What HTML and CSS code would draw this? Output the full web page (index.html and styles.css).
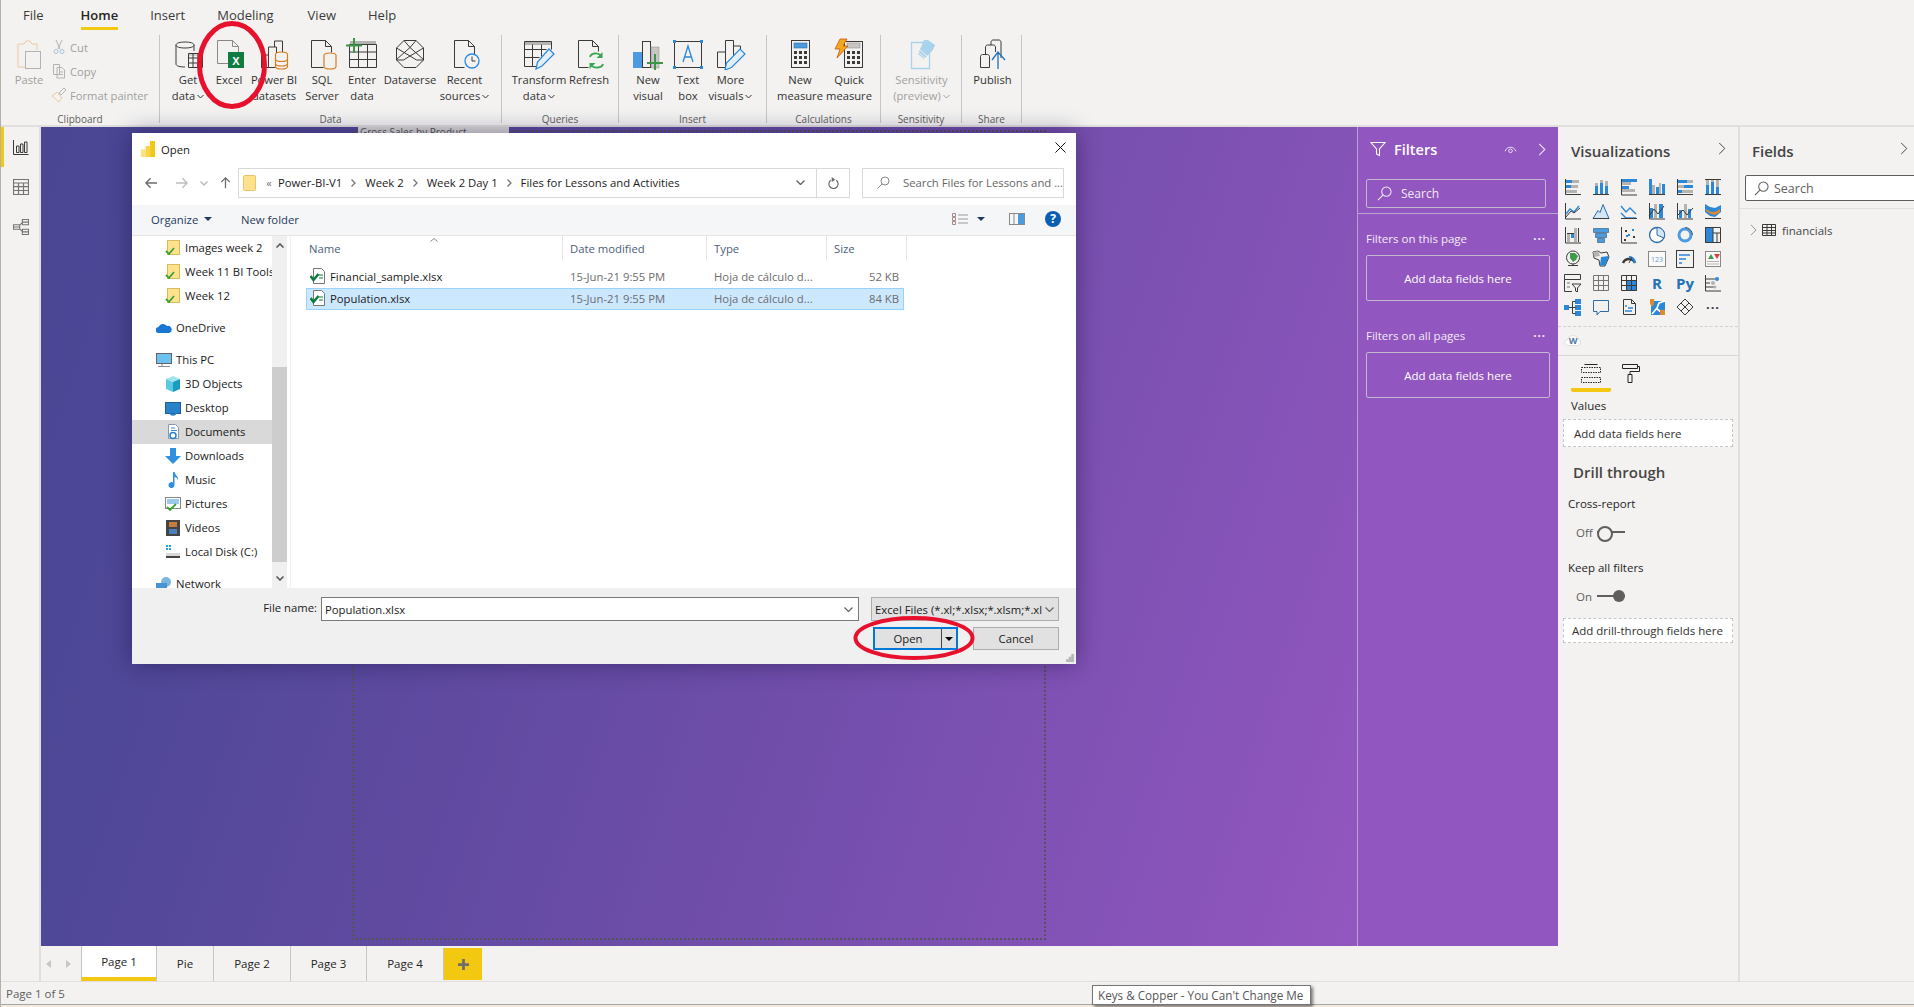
FILE: index.html
```html
<!DOCTYPE html>
<html lang="en">
<head>
<meta charset="utf-8">
<title>Power BI Desktop - Open</title>
<link rel="stylesheet" href="styles.css">
</head>
<body>
<div class="app">
  <header class="ribbon">
    <nav class="menu">
      <span class="menu-item first">File</span>
      <span class="menu-item active">Home</span>
      <span class="menu-item">Insert</span>
      <span class="menu-item modeling">Modeling</span>
      <span class="menu-item">View</span>
      <span class="menu-item">Help</span>
    </nav>
    <div class="groups">
      <section class="rgroup g-clip">
        <div class="ritems clip-items">
          <div class="ritem w44 faded">
            <svg class="ric" viewBox="0 0 32 32"><path class="ln-or" d="M5 6h6l2-3h4l2 3h5v6M5 6v23h7"/><rect class="ln-gr" x="12.5" y="13.5" width="15" height="17"/></svg>
            <span>Paste</span>
          </div>
          <div class="clip-list">
            <div class="clip-row"><svg class="cic" viewBox="0 0 16 16"><path class="ln-gr" d="M5 1l4 9M11 1L7 10"/><circle class="ln-bl" cx="5" cy="12.5" r="2"/><circle class="ln-bl" cx="11" cy="12.5" r="2"/></svg><span>Cut</span></div>
            <div class="clip-row"><svg class="cic" viewBox="0 0 16 16"><path class="ln-gr" d="M2.5 1.5h6v10h-6zM6 4.5h5l2.5 2.5v8H6zM8 9h4M8 11.5h4"/></svg><span>Copy</span></div>
            <div class="clip-row"><svg class="cic" viewBox="0 0 16 16"><path class="ln-or" d="M1 9l5-4 5 6-3 4z"/><path class="ln-gr" d="M8 6l5-5 2 2-5 5z"/></svg><span>Format painter</span></div>
          </div>
        </div>
        <div class="rglabel">Clipboard</div>
      </section>

      <section class="rgroup g-data">
        <div class="ritems">
          <div class="ritem w46">
            <svg class="ric" viewBox="0 0 32 32"><path class="ln" d="M4 7v19c0 2 4 3 9 3M4 7c0-2 4-3 9-3s9 1 9 3v6M4 7c0 2 4 3 9 3s9-1 9-3"/><path class="fill-lg" d="M16 15h15v3H16z"/><path class="ln" d="M16.5 15.5h14v14h-14zM16.5 20h14M16.5 25h14M21 15.500v14M26 15.500v14"/></svg>
            <span>Get</span><span>data <svg class="chev" viewBox="0 0 7 5"><path d="M.5 1l3 3 3-3"/></svg></span>
          </div>
          <div class="ritem w36">
            <svg class="ric" viewBox="0 0 32 32"><path class="ln-g" d="M4.500 2.500h15l6 6v17h-21zM19.500 2.500v6h6"/><rect class="fill-xl" x="15" y="14" width="16" height="16"/><text class="xl-x" x="23" y="27">X</text></svg>
            <span>Excel</span>
          </div>
          <div class="ritem w54">
            <svg class="ric" viewBox="0 0 32 32"><path class="ln" d="M3.500 30V17h7M10.500 30V9h8v9M16.500 9V3h8v13M3.500 29.500h14"/><ellipse class="ln-o" cx="23.500" cy="16.500" rx="6" ry="2.500"/><path class="ln-o" d="M17.500 16.500v12c0 1.500 2.500 2.500 6 2.500s6-1 6-2.500v-12M17.500 21c0 1.500 2.500 2.500 6 2.500s6-1 6-2.500M17.500 25.500c0 1.500 2.500 2.500 6 2.500s6-1 6-2.500"/></svg>
            <span>Power BI</span><span>datasets</span>
          </div>
          <div class="ritem w42">
            <svg class="ric" viewBox="0 0 32 32"><path class="ln" d="M5.500 2.500h14l6 6v6M19.500 2.500v6h6M5.500 2.500v27h12"/><ellipse class="ln-o" cx="24" cy="17.500" rx="6" ry="2.500"/><path class="ln-o" d="M18 17.500v11c0 1.500 2.500 2.500 6 2.500s6-1 6-2.500v-11"/></svg>
            <span>SQL</span><span>Server</span>
          </div>
          <div class="ritem w38">
            <svg class="ric" viewBox="0 0 32 32"><path class="fill-g" d="M4 3h26v4H4z"/><path class="ln" d="M3.500 6.500h27v23h-27zM3.500 14h27M3.500 21.500h27M12.500 6.500v23M21.500 6.500v23"/><path class="ln-gn" d="M8 0v15M0 7.500h16"/></svg>
            <span>Enter</span><span>data</span>
          </div>
          <div class="ritem w58">
            <svg class="ric" viewBox="0 0 32 32"><path class="ln" d="M10 2.500h12l7.500 7.500v12L22 29.500H10L2.500 22V10zM2.500 10l13.500 8 13.500-8M10 2.500l6 7 6-7M16 9.500l-13.500 12M16 9.500l13.500 12M2.500 22l7 0 6.500-4 6.500 4h7"/></svg>
            <span>Dataverse</span>
          </div>
          <div class="ritem w51">
            <svg class="ric" viewBox="0 0 32 32"><path class="ln" d="M5.500 2.500h14l6 6v8M19.500 2.500v6h6M5.500 2.500v27h10"/><circle class="ln-b" cx="23" cy="23" r="7"/><path class="ln" d="M23 18.500V23h3.500"/></svg>
            <span>Recent</span><span>sources <svg class="chev" viewBox="0 0 7 5"><path d="M.5 1l3 3 3-3"/></svg></span>
          </div>
        </div>
        <div class="rglabel">Data</div>
      </section>

      <section class="rgroup g-query">
        <div class="ritems">
          <div class="ritem w58">
            <svg class="ric" viewBox="0 0 32 32"><path class="fill-g" d="M2 3h26v4H2z"/><path class="ln" d="M1.500 3.500h27v8M1.500 3.500v25h13M1.500 11.500h22M1.500 19.500h15M9.500 6.500v22M18.500 6.500v12"/><path class="pen" d="M13 31l1.500-7L26 11l5 5-12 12z"/></svg>
            <span>Transform</span><span>data <svg class="chev" viewBox="0 0 7 5"><path d="M.5 1l3 3 3-3"/></svg></span>
          </div>
          <div class="ritem w42">
            <svg class="ric" viewBox="0 0 32 32"><path class="ln" d="M5.500 2.500h14l6 6v5M19.500 2.500v6h6M5.500 2.500v27h10"/><path class="ln-gn2" d="M17 19c1-4 8-5 11-1M30 26c-1 4-9 5-12 1"/><path class="tri-g" d="M29.500 14v6h-6zM16.500 31v-6h6z"/></svg>
            <span>Refresh</span>
          </div>
        </div>
        <div class="rglabel">Queries</div>
      </section>

      <section class="rgroup g-insert">
        <div class="ritems">
          <div class="ritem w44">
            <svg class="ric" viewBox="0 0 32 32"><rect class="fill-b" x="1" y="14" width="9" height="16"/><rect class="ln" x="10.500" y="3.500" width="8" height="26"/><rect class="fill-g2" x="19" y="9" width="8" height="21"/><path class="ln-gn" d="M23 16v16M15 25h16"/></svg>
            <span>New</span><span>visual</span>
          </div>
          <div class="ritem w36">
            <svg class="ric" viewBox="0 0 32 32"><rect class="ln" x="2.500" y="3.500" width="27" height="26"/><path class="fill-b2" d="M1 2h3v3H1zM28 2h3v3h-3zM1 28h3v3H1zM28 28h3v3h-3z"/><path class="ln-b" d="M11 24l5-16 5 16M12.500 19h7"/></svg>
            <span>Text</span><span>box</span>
          </div>
          <div class="ritem w49">
            <svg class="ric" viewBox="0 0 32 32"><path class="ln" d="M2.500 29.500V14h8M10.500 29.500V2.500h8v17M18.500 8h7v5M2.500 29.500h11"/><path class="pen" d="M10 32l1.500-7L25 11l5 5-13.500 13.500z"/></svg>
            <span>More</span><span>visuals <svg class="chev" viewBox="0 0 7 5"><path d="M.5 1l3 3 3-3"/></svg></span>
          </div>
        </div>
        <div class="rglabel">Insert</div>
      </section>

      <section class="rgroup g-calc">
        <div class="ritems">
          <div class="ritem w52">
            <svg class="ric" viewBox="0 0 32 32"><rect class="ln" x="7.500" y="2.500" width="18" height="27"/><rect class="fill-b-ln" x="10" y="5" width="13" height="5"/><path class="fill-d" d="M10 13h3v3h-3zM15 13h3v3h-3zM20 13h3v3h-3zM10 18h3v3h-3zM15 18h3v3h-3zM20 18h3v3h-3zM10 23h3v3h-3zM15 23h3v3h-3zM20 23h3v3h-3z"/></svg>
            <span>New</span><span>measure</span>
          </div>
          <div class="ritem w46">
            <svg class="ric" viewBox="0 0 32 32"><rect class="ln" x="11.500" y="3.500" width="18" height="26"/><rect class="fill-g2" x="14" y="5" width="13" height="5"/><path class="fill-d" d="M14 13h3v3h-3zM19 13h3v3h-3zM24 13h3v3h-3zM14 18h3v3h-3zM19 18h3v3h-3zM24 18h3v3h-3zM14 23h3v3h-3zM19 23h3v3h-3zM24 23h3v3h-3z"/><path class="bolt" d="M7 1h7l-4 7h5L4 20l3-9H2z"/></svg>
            <span>Quick</span><span>measure</span>
          </div>
        </div>
        <div class="rglabel">Calculations</div>
      </section>

      <section class="rgroup g-sens">
        <div class="ritems">
          <div class="ritem w63 faded">
            <svg class="ric" viewBox="0 0 32 32"><path class="ln-lb" d="M5.500 4.500h18v26h-18z"/><path class="fill-lb" d="M18 2l4 0 7 5-2 5-9 9-6-5z"/><path class="ln-w" d="M12 14l7 6M14 12l7 6"/></svg>
            <span>Sensitivity</span><span>(preview) <svg class="chev" viewBox="0 0 7 5"><path d="M.5 1l3 3 3-3"/></svg></span>
          </div>
        </div>
        <div class="rglabel">Sensitivity</div>
      </section>

      <section class="rgroup g-share">
        <div class="ritems">
          <div class="ritem w45">
            <svg class="ric" viewBox="0 0 32 32"><path class="ln" d="M3.500 29.500v-11c0-1 1-2 2-2h5c1 0 2 1 2 2v11zM8.500 16v-7c0-1 1-2 2-2h6c1 0 2 1 2 2v5M14 7V4c0-1 1-2 2-2h6c1 0 2 1 2 2v16"/><path class="ln-b2" d="M21 31V14M15 22l6-8 7 8"/></svg>
            <span>Publish</span>
          </div>
        </div>
        <div class="rglabel">Share</div>
      </section>
    </div>
  </header>

  <main class="main">
    <aside class="rail">
      <div class="rail-btn on"><svg class="rail-ic" viewBox="0 0 16 16"><path class="ln" d="M.5 1v14.500H15.500M3.500 7h2.500v6.500H3.500zM7.500 5h2.500v8.500H7.500zM11.500 3H14v10.500h-2.500z"/></svg></div>
      <div class="rail-btn"><svg class="rail-ic" viewBox="0 0 16 16"><path class="ln-m" d="M.5 .5h15v15H.5zM.5 4h15M.5 7.700h15M.5 11.500h15M5.500 4v11.500M10.500 4v11.500"/></svg></div>
      <div class="rail-btn"><svg class="rail-ic" viewBox="0 0 18 18"><path class="ln-m" d="M.5 6.500h7v5h-7zM10.500 .5h7v6h-7zM10.500 11.500h7v6h-7zM.5 9h7M10.500 3.500h7M10.500 14.500h7M7.500 7l3-3M7.500 11l3 3"/></svg></div>
    </aside>

    <div class="center">
      <div class="stage">
        <div class="page-area">
          <div class="visual-outline"></div>
          <div class="visual-peek">Gross Sales by Product</div>
        </div>
        <aside class="filters">
          <div class="fl-head">
            <svg class="fl-funnel" viewBox="0 0 16 16"><path d="M1 1.500h14L9.500 8v6.500l-3-1.500V8z"/></svg>
            <span class="fl-title">Filters</span>
            <svg class="fl-eye" viewBox="0 0 14 10"><path d="M1 7c2-6 10-6 12 0"/><circle cx="7" cy="6.500" r="2"/></svg>
            <svg class="fl-chev" viewBox="0 0 8 14"><path d="M1 1l6 6-6 6"/></svg>
          </div>
          <div class="fl-search">
            <svg class="srch" viewBox="0 0 16 16"><circle cx="10" cy="6" r="5"/><path d="M6.500 9.500L1 15"/></svg>
            <span>Search</span>
          </div>
          <div class="fl-rule"></div>
          <div class="fl-sec"><span>Filters on this page</span><span class="dots">...</span></div>
          <div class="fl-box">Add data fields here</div>
          <div class="fl-sec fl-sec2"><span>Filters on all pages</span><span class="dots">...</span></div>
          <div class="fl-box">Add data fields here</div>
        </aside>
      </div>
      <div class="tabbar">
        <div class="tab-arrows"><span class="tri-l"></span><span class="tri-r"></span></div>
        <div class="tab on">Page 1</div>
        <div class="tab t-pie">Pie</div>
        <div class="tab">Page 2</div>
        <div class="tab t-p3">Page 3</div>
        <div class="tab">Page 4</div>
        <div class="tab-add"><svg viewBox="0 0 12 12"><path d="M4.500 0h3v4.500H12v3H7.500V12h-3V7.500H0v-3h4.500z"/></svg></div>
      </div>
    </div>

    <aside class="viz">
      <div class="pane-head"><span>Visualizations</span><svg class="pane-chev" viewBox="0 0 8 14"><path d="M1 1l6 6-6 6"/></svg></div>
      <div class="viz-grid">
        <svg class="vi" viewBox="0 0 18 18"><path d="M1.500 1v15.500H17"/><rect class="g" x="2" y="2" width="13" height="3"/><rect class="b" x="2" y="2" width="6" height="3"/><rect class="b" x="2" y="7" width="5" height="3"/><rect class="g" x="7" y="7" width="7" height="3"/><rect class="g" x="2" y="12" width="11" height="3"/></svg>
        <svg class="vi" viewBox="0 0 18 18"><path d="M1 16.500h16"/><rect class="b" x="3" y="8" width="3" height="8"/><rect class="g" x="3" y="5" width="3" height="3"/><rect class="b" x="8" y="5" width="3" height="11"/><rect class="g" x="8" y="2" width="3" height="3"/><rect class="b" x="13" y="8" width="3" height="8"/><rect class="g" x="13" y="3" width="3" height="5"/></svg>
        <svg class="vi" viewBox="0 0 18 18"><path d="M1.500 1v16H17"/><rect class="b" x="2" y="1" width="15" height="3"/><rect class="g" x="2" y="4" width="9" height="3"/><rect class="b" x="2" y="8" width="7" height="3"/><rect class="g" x="2" y="11" width="13" height="3"/></svg>
        <svg class="vi" viewBox="0 0 18 18"><path d="M1 16.500h16"/><rect class="b" x="1" y="1" width="3" height="15"/><rect class="g" x="4" y="7" width="3" height="9"/><rect class="b" x="8" y="9" width="3" height="7"/><rect class="g" x="11" y="5" width="2" height="11"/><rect class="b" x="14" y="6" width="3" height="10"/></svg>
        <svg class="vi" viewBox="0 0 18 18"><path d="M1.500 1v16"/><rect class="b" x="2" y="2" width="9" height="3"/><rect class="g" x="11" y="2" width="6" height="3"/><rect class="g" x="2" y="7" width="6" height="3"/><rect class="b" x="8" y="7" width="9" height="3"/><rect class="b" x="2" y="12" width="4" height="3"/><rect class="g" x="6" y="12" width="11" height="3"/><path d="M1 16.500h16"/></svg>
        <svg class="vi" viewBox="0 0 18 18"><path d="M1 16.500h16M1 1.500h16"/><rect class="b" x="2" y="7" width="3" height="9"/><rect class="g" x="2" y="2" width="3" height="5"/><rect class="b" x="7" y="4" width="3" height="12"/><rect class="g" x="7" y="2" width="3" height="2"/><rect class="b" x="12" y="9" width="3" height="7"/><rect class="g" x="12" y="2" width="3" height="7"/></svg>

        <svg class="vi" viewBox="0 0 18 18"><path d="M1.500 1v16H17"/><path class="lb" d="M2 12l4-5 4 3 5-6"/><path d="M2 15l5-6 3 2 6-5"/></svg>
        <svg class="vi" viewBox="0 0 18 18"><path class="lb2" d="M1 16.500l5-8 2 2 3-8 6 14z"/><path d="M1 16.500h16"/></svg>
        <svg class="vi" viewBox="0 0 18 18"><path class="lb" d="M1 4l5 6 4-4 6 6"/><path class="lb" d="M1 11l5 5h10"/><path d="M1 16.500h16"/></svg>
        <svg class="vi" viewBox="0 0 18 18"><rect class="b" x="2" y="6" width="3" height="10"/><rect class="g" x="6" y="2" width="3" height="14"/><rect class="b" x="11" y="2" width="4" height="14"/><path d="M1.500 1v16H17M1 14l5-7 4 5 6-8"/></svg>
        <svg class="vi" viewBox="0 0 18 18"><rect class="b" x="3" y="8" width="3" height="8"/><rect class="g" x="8" y="2" width="3" height="14"/><rect class="b" x="12" y="7" width="3" height="9"/><path d="M1.500 1v16H17M1 14l6-6 4 5 6-7"/></svg>
        <svg class="vi" viewBox="0 0 18 18"><path class="b" d="M1 2l5 3 5 1 6-3v7l-6 5-5-1-5-4z"/><path class="o" d="M2 7l5 3 4 0 5-3v3l-5 3-4-1-5-3z"/><path d="M1 16.500h16"/></svg>

        <svg class="vi" viewBox="0 0 18 18"><path d="M1.500 1v16H17"/><rect class="g" x="3" y="7" width="3" height="9"/><rect class="b" x="7" y="7" width="3" height="5"/><rect class="g" x="10" y="2" width="3" height="14"/><path d="M14.500 2v14M3 7.500h7"/></svg>
        <svg class="vi" viewBox="0 0 18 18"><path class="bs" d="M1.500 2.500h15v4h-15zM3.500 7.500h11v4h-11zM5.500 12.500h7v4h-7z"/></svg>
        <svg class="vi" viewBox="0 0 18 18"><path d="M1.500 1v16H17"/><path class="dk" d="M4 13h2v2H4zM5 4h2v2H5zM13 10h2v2h-2z"/><path class="b" d="M8 8h2v2H8zM12 3h2v2h-2zM6 9h2v2H6z"/></svg>
        <svg class="vi" viewBox="0 0 18 18"><circle class="wd" cx="9" cy="9" r="7.500"/><path class="lb2" d="M9 9V1.500A7.500 7.500 0 0 1 16 12z"/></svg>
        <svg class="vi" viewBox="0 0 18 18"><circle class="dn" cx="9" cy="9" r="6"/><path class="dk2" d="M9 1.500A7.500 7.500 0 0 1 16.500 9"/></svg>
        <svg class="vi" viewBox="0 0 18 18"><rect class="b" x="1" y="1" width="8" height="16"/><path d="M1.500 1.500h15v15h-15zM9 1.500v15M9 7h7.500M13 7v9.500"/></svg>

        <svg class="vi" viewBox="0 0 18 18"><circle cx="9" cy="7.500" r="6.500"/><path class="gn" d="M6 3h5l3 3-2 4-3 2-3-4z"/><path d="M4 15.500h10M9 14v2"/></svg>
        <svg class="vi" viewBox="0 0 18 18"><path d="M1 2l5-1 3 2 6-1 2 5-4 9-5 0-1-6-5-2z"/><path class="b" d="M9 7l8-1-4 10-5-1z"/><path class="g" d="M1 2l5-1 2 5-6 1z"/></svg>
        <svg class="vi" viewBox="0 0 18 18"><path class="wide" d="M3 13a6.500 6.500 0 0 1 12 0"/><path class="wide-b" d="M9 7a6.500 6.500 0 0 1 6 6"/><path d="M9 13l3-6"/></svg>
        <svg class="vi" viewBox="0 0 18 18"><rect class="lg-ln" x=".5" y="1.500" width="17" height="15"/><text class="vt-123" x="9" y="12">123</text></svg>
        <svg class="vi" viewBox="0 0 18 18"><rect x=".5" y=".5" width="17" height="17"/><path class="bs2" d="M3 5h11M3 9h7M3 13h3"/></svg>
        <svg class="vi" viewBox="0 0 18 18"><rect class="lg-ln" x="1.500" y="1.500" width="15" height="15"/><path class="gn" d="M4 9l3-5 3 5z"/><path class="rd" d="M10 4h6l-3 5z"/><path class="gy-l" d="M3 11.500h12M3 14h12"/></svg>

        <svg class="vi" viewBox="0 0 18 18"><path d="M.5 .5h16v5H.5zM.5 5.500v12H8"/><path class="g" d="M3 8h3v2H3zM3 12h3v2H3z"/><path d="M8 10h9l-3.500 4v4l-2-1v-3z"/></svg>
        <svg class="vi gyl" viewBox="0 0 18 18"><path d="M1.500 1.500h15v15h-15zM1.500 6.500h15M1.500 11.500h15M6.500 1.500v15M11.500 1.500v15"/></svg>
        <svg class="vi" viewBox="0 0 18 18"><rect class="b" x="6" y="6" width="11" height="11"/><path d="M1.500 1.500h15v15h-15zM1.500 6.500h15M1.500 11.500h15M6.500 1.500v15M11.500 1.500v15"/></svg>
        <span class="vt">R</span>
        <span class="vt">Py</span>
        <svg class="vi" viewBox="0 0 18 18"><path d="M1.500 1v16H17M1 5h10M1 9h5M1 13h9"/><circle class="b" cx="13" cy="5" r="2"/><circle class="g" cx="9" cy="9" r="2"/><circle class="g" cx="11" cy="13" r="1.500"/></svg>

        <svg class="vi" viewBox="0 0 18 18"><rect class="b" x="0" y="7" width="5" height="5"/><rect class="b" x="11" y="1" width="6" height="5"/><rect class="b" x="11" y="7" width="6" height="5"/><rect class="b" x="11" y="13" width="6" height="5"/><path d="M5 9.500h4M8.500 3.500v12M8.500 3.500h3M8.500 9.500h3M8.500 15.500h3"/></svg>
        <svg class="vi lbl" viewBox="0 0 18 18"><path d="M1.500 2.500h15v11H8L5 17v-3.500H1.500z"/></svg>
        <svg class="vi" viewBox="0 0 18 18"><path d="M3.500 1.500h8l4 4v11h-12zM11.500 1.500v4h4"/><path class="bs2" d="M5 8h2M8 10h5M5 13h7"/></svg>
        <svg class="vi" viewBox="0 0 18 18"><path class="b" d="M3 3h14v14H3z"/><path class="wl" d="M4 16l5-6 2-5 6-2M9 11l7 5"/><path class="o" d="M2 1h4v5l-2 3-2-3zM12 12h5v5h-5z"/></svg>
        <svg class="vi" viewBox="0 0 18 18"><path d="M9 1l8 8-8 8-8-8zM5 5l8 8M13 5l-8 8"/></svg>
        <span class="vt-more">...</span>
      </div>
      <div class="viz-dash"></div>
      <div class="viz-w"><svg class="cloud" viewBox="0 0 18 12"><path d="M4 11.500a3 3 0 0 1-.5-6 5.500 5.500 0 0 1 10.500-.5 3.300 3.300 0 0 1 0 6.500z"/><text x="9" y="10">W</text></svg></div>
      <div class="viz-tabs">
        <div class="viz-tab on"><svg class="tab-ic" viewBox="0 0 20 20"><path d="M3.500 1.500h13"/><path class="dash" d="M.5 4.500h19v5H.5zM.5 14.500h19v5H.5z"/></svg></div>
        <div class="viz-tab"><svg class="tab-ic" viewBox="0 0 20 20"><path d="M1.500 1.500h15v4h-15zM16.500 3.500h2v5H9v3M7 11.500h4v8H7z"/></svg></div>
      </div>
      <div class="viz-lbl">Values</div>
      <div class="well w-values">Add data fields here</div>
      <h3 class="viz-h">Drill through</h3>
      <div class="viz-sub">Cross-report</div>
      <div class="toggle-row"><span class="toggle-txt">Off</span><span class="sw off"></span></div>
      <div class="viz-sub sub2">Keep all filters</div>
      <div class="toggle-row"><span class="toggle-txt">On</span><span class="sw on"></span></div>
      <div class="well w-drill">Add drill-through fields here</div>
    </aside>

    <aside class="fields">
      <div class="pane-head head-fields"><span>Fields</span><svg class="pane-chev" viewBox="0 0 8 14"><path d="M1 1l6 6-6 6"/></svg></div>
      <div class="fd-search">
        <svg class="srch" viewBox="0 0 16 16"><circle cx="10" cy="6" r="5"/><path d="M6.500 9.500L1 15"/></svg>
        <span>Search</span>
      </div>
      <div class="fd-rule"></div>
      <div class="fd-row">
        <svg class="fd-chev" viewBox="0 0 8 14"><path d="M1 1l6 6-6 6"/></svg>
        <svg class="fd-tbl" viewBox="0 0 14 12"><path d="M.5 .5h13v11H.5zM.5 3.500h13M.5 6.500h13M.5 9h13M5 .5v11M9.500 .5v11"/></svg>
        <span>financials</span>
      </div>
    </aside>
  </main>

  <footer class="status">Page 1 of 5</footer>
  <div class="under"></div>

  <div class="dialog">
    <div class="dl-title">
      <svg class="dl-logo" viewBox="0 0 14 16"><rect fill="#f2c811" x="9" y="0" width="5" height="16"/><rect fill="#f7d44c" x="4.500" y="5" width="5" height="11"/><rect fill="#fbe27f" x="0" y="8.500" width="5" height="7.500"/></svg>
      <span>Open</span>
      <svg class="dl-x" viewBox="0 0 11 11"><path d="M.5 .5l10 10M10.500 .5l-10 10"/></svg>
    </div>
    <div class="dl-addr">
      <div class="dl-navs">
        <span class="nv nv1"><svg viewBox="0 0 14 12"><path d="M1 6h12M6 1L1 6l5 5"/></svg></span>
        <span class="nv nv2 dim"><svg viewBox="0 0 14 12"><path d="M13 6H1M8 1l5 5-5 5"/></svg></span>
        <span class="nv nv3 dim"><svg viewBox="0 0 8 5"><path d="M.5 .5L4 4 7.500 .5"/></svg></span>
        <span class="nv nv4"><svg viewBox="0 0 12 14"><path d="M6 13V1M1 6l5-5 5 5"/></svg></span>
      </div>
      <div class="dl-crumbs">
        <svg class="crumb-folder" viewBox="0 0 13 16"><rect x=".5" y=".5" width="12" height="15" rx="1"/></svg>
        <span class="crumb-more">«</span>
        <span>Power-BI-V1</span><svg class="crumb-sep" viewBox="0 0 5 8"><path d="M.5 .5L4 4 .5 7.500"/></svg>
        <span>Week 2</span><svg class="crumb-sep" viewBox="0 0 5 8"><path d="M.5 .5L4 4 .5 7.500"/></svg>
        <span>Week 2 Day 1</span><svg class="crumb-sep" viewBox="0 0 5 8"><path d="M.5 .5L4 4 .5 7.500"/></svg>
        <span>Files for Lessons and Activities</span>
        <svg class="crumb-down" viewBox="0 0 9 5"><path d="M.5 .5L4.500 4.500 8.500 .5"/></svg>
      </div>
      <div class="dl-refresh"><svg viewBox="0 0 12 13"><path d="M3 3.500A5 5 0 1 0 9 3.500"/><path class="rf-t" d="M4 0v5.500L8 3z"/></svg></div>
      <div class="dl-search">
        <svg class="dl-srch" viewBox="0 0 13 13"><circle cx="8" cy="5" r="4"/><path d="M5 8l-4.500 4.500"/></svg>
        <span>Search Files for Lessons and ...</span>
      </div>
    </div>
    <div class="dl-tools">
      <span class="tool-org">Organize<i class="caret"></i></span>
      <span class="tool-new">New folder</span>
      <svg class="tool-view" viewBox="0 0 16 12"><path class="vw-d" d="M.5 .5h3v3h-3zM.5 4.500h3v3h-3zM.5 8.500h3v3h-3z"/><path d="M6 2h10M6 6h10M6 10h10"/></svg>
      <i class="caret caret-view"></i>
      <svg class="tool-pane" viewBox="0 0 16 12"><rect class="pn-b" x="9" y="1" width="6" height="10"/><rect x=".5" y=".5" width="15" height="11"/><path d="M5 .5v11"/></svg>
      <span class="tool-help">?</span>
    </div>
    <div class="dl-body">
      <div class="dl-nav">
        <div class="nrow in2 n-first"><svg class="nic" viewBox="0 0 16 16"><rect class="fo" x="2.500" y=".5" width="12" height="14"/><path class="ck" d="M1 11l3 3 5-6"/></svg><span>Images week 2</span></div>
        <div class="nrow in2"><svg class="nic" viewBox="0 0 16 16"><rect class="fo" x="2.500" y=".5" width="12" height="14"/><path class="ck" d="M1 11l3 3 5-6"/></svg><span>Week 11 BI Tools</span></div>
        <div class="nrow in2"><svg class="nic" viewBox="0 0 16 16"><rect class="fo" x="2.500" y=".5" width="12" height="14"/><path class="ck" d="M1 11l3 3 5-6"/></svg><span>Week 12</span></div>
        <div class="nrow in1 gap"><svg class="nic" viewBox="0 0 16 16"><path class="od" d="M3 13a3 3 0 0 1-.5-6A5 5 0 0 1 11 6a3.500 3.500 0 0 1 2 7z"/></svg><span>OneDrive</span></div>
        <div class="nrow in1 gap"><svg class="nic" viewBox="0 0 16 16"><rect class="pc" x=".5" y="1.500" width="15" height="10"/><path class="pcs" d="M6 12v2M2 14.500h12"/></svg><span>This PC</span></div>
        <div class="nrow in2"><svg class="nic" viewBox="0 0 16 16"><path class="cb1" d="M8 0l7 3-7 3-7-3z"/><path class="cb2" d="M1 3l7 3v10l-7-3z"/><path class="cb3" d="M15 3L8 6v10l7-3z"/></svg><span>3D Objects</span></div>
        <div class="nrow in2"><svg class="nic" viewBox="0 0 16 16"><rect class="dsk" x=".5" y="2.500" width="15" height="11"/><circle class="dsk-c" cx="8" cy="12" r="3"/></svg><span>Desktop</span></div>
        <div class="nrow in2 sel"><svg class="nic" viewBox="0 0 16 16"><path class="doc" d="M3.500 .5h7l3 3v11h-10z"/><path class="doc-l" d="M6 4h4M6 6.500h6"/><circle class="dsk-c" cx="8" cy="11.500" r="3"/></svg><span>Documents</span></div>
        <div class="nrow in2"><svg class="nic" viewBox="0 0 16 16"><path class="dl" d="M5 0h6v8h5l-8 8-8-8h5z"/></svg><span>Downloads</span></div>
        <div class="nrow in2"><svg class="nic" viewBox="0 0 16 16"><path class="dl" d="M8 0h1.500c.5 3 4 4 3.500 8-1-2-2-3-3.500-3v8a3 3 0 1 1-1.500-2.500z"/></svg><span>Music</span></div>
        <div class="nrow in2"><svg class="nic" viewBox="0 0 16 16"><rect class="pct" x=".5" y="1.500" width="15" height="11"/><path class="pct-b" d="M2 3h12v5H2z"/><path class="ck" d="M2 11l3 3 6-6"/></svg><span>Pictures</span></div>
        <div class="nrow in2"><svg class="nic" viewBox="0 0 16 16"><rect class="vd" x="1" y="0" width="14" height="16"/><rect class="vd-1" x="4" y="2" width="8" height="5"/><rect class="vd-2" x="4" y="9" width="8" height="5"/></svg><span>Videos</span></div>
        <div class="nrow in2"><svg class="nic" viewBox="0 0 16 16"><path class="win" d="M1 1h2v2H1zM4 1h2v2H4zM1 4h2v2H1zM4 4h2v2H4z"/><rect class="drv" x="1" y="9" width="14" height="5"/><path class="drv-l" d="M1 13h14"/></svg><span>Local Disk (C:)</span></div>
        <div class="nrow in1 gap"><svg class="nic" viewBox="0 0 16 16"><circle class="net" cx="10" cy="6" r="5"/><rect class="net-b" x="0" y="7" width="11" height="8"/></svg><span>Network</span></div>
      </div>
      <div class="dl-scroll">
        <svg class="sb-arrow" viewBox="0 0 8 5"><path d="M.5 4.500L4 1l3.500 3.500"/></svg>
        <div class="sb-track"><div class="sb-thumb"></div></div>
        <svg class="sb-arrow" viewBox="0 0 8 5"><path d="M.5 .5L4 4 7.500 .5"/></svg>
      </div>
      <div class="dl-list">
        <div class="lh">
          <span class="c-name">Name<svg class="sort" viewBox="0 0 8 4"><path d="M.5 3.500L4 .5l3.500 3"/></svg></span>
          <span class="c-date">Date modified</span>
          <span class="c-type">Type</span>
          <span class="c-size">Size</span>
        </div>
        <div class="lrow">
          <span class="f-name"><svg class="xl" viewBox="0 0 16 16"><path class="xl-p" d="M3.500 .5h8l3 3v12h-11z"/><path class="xl-c" d="M.5 8l3 4 5-6"/><path class="xl-l" d="M9 7h4M9 10h4"/></svg>Financial_sample.xlsx</span>
          <span class="f-date">15-Jun-21 9:55 PM</span>
          <span class="f-type">Hoja de cálculo d...</span>
          <span class="f-size">52 KB</span>
        </div>
        <div class="lrow sel">
          <span class="f-name"><svg class="xl" viewBox="0 0 16 16"><path class="xl-p" d="M3.500 .5h8l3 3v12h-11z"/><path class="xl-c" d="M.5 8l3 4 5-6"/><path class="xl-l" d="M9 7h4M9 10h4"/></svg>Population.xlsx</span>
          <span class="f-date">15-Jun-21 9:55 PM</span>
          <span class="f-type">Hoja de cálculo d...</span>
          <span class="f-size">84 KB</span>
        </div>
      </div>
    </div>
    <div class="dl-foot">
      <div class="foot-r1">
        <label class="foot-lbl">File name:</label>
        <div class="foot-in"><span>Population.xlsx</span><svg viewBox="0 0 9 5"><path d="M.5 .5L4.500 4.500 8.500 .5"/></svg></div>
        <div class="foot-sel"><span>Excel Files (*.xl;*.xlsx;*.xlsm;*.xl</span><svg viewBox="0 0 9 5"><path d="M.5 .5L4.500 4.500 8.500 .5"/></svg></div>
      </div>
      <div class="foot-r2">
        <div class="btn btn-open"><span class="btn-lab">Open</span><span class="btn-split"><i></i></span></div>
        <div class="btn btn-cancel">Cancel</div>
      </div>
      <svg class="grip" viewBox="0 0 9 9"><path d="M6 0h3v3H6zM3 3h3v3H3zM6 3h3v3H6zM0 6h3v3H0zM3 6h3v3H3zM6 6h3v3H6z"/></svg>
    </div>
  </div>

  <svg class="ring ring-excel" viewBox="0 0 72 90"><ellipse cx="36" cy="45" rx="32.500" ry="41.500"/></svg>
  <svg class="ring ring-open" viewBox="0 0 124 46"><ellipse cx="62" cy="23" rx="58.500" ry="20"/></svg>
  <div class="tooltip">Keys &amp; Copper - You Can't Change Me</div>
</div>
</body>
</html>
```

FILE: styles.css
```css
* { box-sizing: border-box; }
html, body { margin: 0; padding: 0; height: 100%; overflow: hidden; }
body { font-family: "Open Sans", "Liberation Sans", sans-serif; font-size: 11.5px; color: #252423; background: #f3f2f1; }
svg { display: block; flex: none; }
.app { position: relative; width: 1914px; height: 1007px; border-left: 1px solid #b3b0ad; overflow: hidden; }

/* ribbon */
.ribbon { height: 127px; background: #f3f2f1; border-bottom: 2px solid #e1dfdd; }
.menu { height: 30px; display: flex; gap: 32px; padding-left: 22px; font-size: 13px; }
.menu-item { height: 30px; line-height: 31px; color: #3b3a39; }
.menu-item.first { margin-right: 5px; }
.menu-item.modeling { margin-right: 2px; }
.menu-item.active { font-weight: 600; color: #252423; border-bottom: 3px solid #f2c811; line-height: 30px; }
.groups { display: flex; margin-top: 5px; height: 88px; }
.rgroup { height: 88px; display: flex; flex-direction: column; border-right: 1px solid #c8c6c4; flex: none; }
.ritems { height: 77px; display: flex; }
.rglabel { height: 11px; line-height: 14px; text-align: center; font-size: 10px; color: #605e5c; }
.g-clip { width: 159px; }
.g-data { width: 342px; } .g-data .ritems { padding-left: 5px; }
.g-query { width: 117px; } .g-query .ritems { padding-left: 8px; }
.g-insert { width: 148px; } .g-insert .ritems { padding-left: 7px; }
.g-calc { width: 114px; } .g-calc .ritems { padding-left: 7px; }
.g-sens { width: 81px; } .g-sens .ritems { padding-left: 9px; }
.g-share { width: 60px; } .g-share .ritems { padding-left: 8px; }
.ritem { display: flex; flex-direction: column; align-items: center; flex: none; white-space: nowrap; line-height: 16px; font-size: 11.2px; color: #323130; padding-top: 3px; }
.ritem > span { display: flex; align-items: center; gap: 2px; }
.ric { width: 32px; height: 32px; margin-bottom: 2px; }
.chev { width: 7px; height: 5px; fill: none; stroke: currentColor; stroke-width: 1; }
.w36 { width: 36px; } .w38 { width: 38px; } .w42 { width: 42px; } .w44 { width: 44px; } .w45 { width: 45px; }
.w46 { width: 46px; } .w49 { width: 49px; } .w51 { width: 51px; } .w52 { width: 52px; } .w54 { width: 54px; }
.w58 { width: 58px; } .w63 { width: 63px; }
.faded { color: #a19f9d; }
.clip-items { padding-left: 6px; }
.clip-list { display: flex; flex-direction: column; color: #a19f9d; margin-left: 0; }
.clip-row { display: flex; align-items: center; gap: 3px; height: 24px; white-space: nowrap; font-size: 11.2px; }
.cic { width: 16px; height: 16px; }
.ln, .ln-g, .ln-o, .ln-b, .ln-m, .ln-gn, .ln-gn2, .ln-or, .ln-gr, .ln-bl, .ln-lb, .ln-w, .ln-b2 { fill: none; stroke-width: 1; }
.ln { stroke: #3b3a39; }
.ln-g { stroke: #8a8886; }
.ln-o { stroke: #d97b1e; fill: #f3f2f1; stroke-width: 1.200; }
.ln-b { stroke: #2b88d8; stroke-width: 1.300; }
.ln-b2 { stroke: #2073b8; stroke-width: 1.300; }
.ln-m { stroke: #767472; stroke-width: 1.200; }
.ln-gn { stroke: #3e9447; stroke-width: 2; }
.ln-gn2 { stroke: #3aa655; stroke-width: 1.800; }
.ln-or { stroke: #eec9a0; }
.ln-gr { stroke: #b5b3b1; }
.ln-bl { stroke: #a9c3da; }
.ln-lb { stroke: #a9d2ec; fill: #f3f2f1; stroke-width: 1.300; }
.ln-w { stroke: #f3f2f1; }
.fill-lg { fill: #d2d0ce; }
.fill-g { fill: #b5b3b1; }
.fill-g2 { fill: #c8c6c4; stroke: #8a8886; stroke-width: .5; }
.fill-b { fill: #4c9be0; }
.fill-b2 { fill: #2b88d8; }
.fill-b-ln { fill: #4c9be0; stroke: #2b6ca8; stroke-width: .6; }
.fill-xl { fill: #107c41; }
.fill-d { fill: #3b3a39; }
.fill-lb { fill: #a9d2ec; }
.xl-x { font: 700 11px "Liberation Sans", sans-serif; fill: #fff; text-anchor: middle; }
.pen { fill: #e3f0fa; stroke: #2b88d8; stroke-width: 1.200; }
.tri-g { fill: #3aa655; }
.bolt { fill: #f2a81d; stroke: #c55a11; stroke-width: .8; }

/* main */
.main { display: flex; height: 854px; }
.rail { width: 40px; flex: none; border-right: 2px solid #e1dfdd; }
.rail-btn { height: 40px; display: flex; align-items: center; justify-content: center; border-left: 3px solid transparent; padding-right: 1px; }
.rail-btn.on { border-left-color: #f2c811; }
.rail-ic { width: 16px; height: 16px; }
.center { width: 1517px; flex: none; display: flex; flex-direction: column; }
.stage { height: 819px; display: flex; }
.page-area { width: 1316px; position: relative; background: linear-gradient(108deg, #4a4694 0%, #4c4796 12%, #6a4ca6 52%, #9357c0 100%); }
.visual-outline { position: absolute; left: 311px; top: 3px; width: 694px; height: 810px; border: 2px dotted #55525f; }
.visual-peek { position: absolute; left: 317px; top: 0; width: 151px; height: 10px; padding-left: 2px; background: #dcdad8; font-size: 10px; line-height: 10px; color: #555; overflow: hidden; }
.filters { width: 201px; background: #9156bf; border-left: 1px solid #b9a3d1; color: #fff; padding: 0 8px; }
.fl-head { height: 44px; margin-bottom: 8px; display: flex; align-items: center; margin-left: -8px; margin-right: -8px; padding-left: 12px; }
.fl-funnel { width: 16px; height: 16px; fill: none; stroke: #fff; stroke-width: 1.100; }
.fl-title { font-size: 14.500px; font-weight: 600; margin-left: 8px; width: 102px; }
.fl-eye { width: 13px; height: 9px; fill: none; stroke: #ebe0f3; stroke-width: 1.100; margin-right: 21px; margin-left: 8px; }
.fl-chev { width: 8px; height: 13px; fill: none; stroke: #ebe0f3; stroke-width: 1.200; }
.fl-search { height: 29px; width: 180px; border: 1px solid #c4b8d0; border-radius: 2px; display: flex; align-items: center; gap: 9px; padding-left: 10px; font-size: 12px; color: #f1ebf6; }
.srch { width: 15px; height: 15px; fill: none; stroke: currentColor; stroke-width: 1.100; }
.fl-rule { height: 1px; background: #b9a3d1; margin: 5px -8px 0; }
.fl-sec { display: flex; justify-content: space-between; width: 180px; height: 16px; line-height: 16px; margin-top: 17px; margin-bottom: 8px; color: #f1ebf6; }
.fl-sec2 { margin-top: 27px; }
.dots { font-weight: 700; line-height: 10px; letter-spacing: 1px; }
.fl-box { width: 184px; height: 46px; border: 1px solid #c4b8d0; border-radius: 2px; display: flex; align-items: center; justify-content: center; }

.tabbar { height: 35px; display: flex; background: #f3f2f1; }
.tab-arrows { width: 40px; display: flex; align-items: center; gap: 15px; }
.tri-l, .tri-r { width: 0; height: 0; border: 4px solid transparent; border-width: 4px 5px; }
.tri-l { border-right-color: #c8c6c4; }
.tri-r { border-left-color: #c8c6c4; }
.tab { width: 77px; border-left: 1px solid #c8c6c4; display: flex; align-items: center; justify-content: center; color: #252423; }
.tab.on { width: 75px; background: #fff; border-bottom: 4px solid #f2c811; }
.t-pie { width: 57px; }
.tab.t-p3 { width: 76px; }
.tab-add { width: 39px; height: 32px; margin-top: 2px; background: #f2c811; border-left: 1px solid #c8c6c4; display: flex; align-items: center; justify-content: center; }
.tab-add svg { width: 11px; height: 11px; fill: #6e6d68; }

.viz { width: 182px; flex: none; border-right: 2px solid #e1dfdd; background: #f3f2f1; }
.pane-head { height: 48px; display: flex; align-items: center; justify-content: space-between; padding: 0 12px 0 13px; font-size: 15px; font-weight: 600; color: #444; }
.head-fields { padding: 0 6px 0 12px; }
.pane-chev { width: 8px; height: 13px; fill: none; stroke: #3b3a39; stroke-width: 1; margin-top: -6px; }
.viz-grid { display: grid; grid-template-columns: repeat(6, 28px); grid-auto-rows: 24px; padding-left: 1px; justify-items: center; align-items: center; }
.vi { width: 18px; height: 18px; fill: none; stroke: #3b3a39; stroke-width: 1; }
.vi .b { fill: #2b88d8; stroke: none; }
.vi .g { fill: #b5b3b1; stroke: none; }
.vi .o { fill: #e08a2b; stroke: none; }
.vi .gn { fill: #3f9b4a; stroke: none; }
.vi .rd { fill: #d64545; stroke: none; }
.vi .dk { fill: #3b3a39; stroke: none; }
.vi .lb { stroke: #2b88d8; stroke-width: 1.400; }
.vi .lb2 { fill: #d3e6f7; stroke: #2b6ca8; }
.vi .bs { fill: #4c9be0; stroke: #5a7fa0; }
.vi .bs2 { stroke: #2b88d8; stroke-width: 1.500; }
.vi .wd { fill: #fff; stroke: #2b6ca8; stroke-width: 1.300; }
.vi .dn { stroke: #4c9be0; stroke-width: 3; }
.vi .dk2 { stroke: #3b3a39; stroke-width: .8; }
.vi .wide { stroke: #3b3a39; stroke-width: 2.500; }
.vi .wide-b { stroke: #2b88d8; stroke-width: 2.500; }
.vi .lg-ln { stroke: #8a8886; fill: #fafafa; }
.vi .gy-l { stroke: #b5b3b1; }
.vi .wl { stroke: #fff; stroke-width: 1.600; }
.vt-123 { font: 400 7px "Open Sans", sans-serif; fill: #5ea3dc; stroke: none; text-anchor: middle; }
.gyl { stroke: #767472; }
.lbl { stroke: #2b6ca8; }
.vt { font: 700 15px "Open Sans", sans-serif; line-height: 18px; color: #2073b8; }
.vt-more { font-size: 13px; font-weight: 700; letter-spacing: 1px; line-height: 12px; color: #3b3a39; padding-bottom: 6px; }
.viz-dash { margin-top: 7px; border-top: 1px dashed #d2d0ce; }
.viz-w { height: 29px; border-bottom: 1px solid #d9d7d5; padding: 7px 0 0 6px; }
.cloud { width: 18px; height: 12px; fill: #fff; stroke: #e1dfdd; }
.cloud text { font: 700 9px "Open Sans", sans-serif; fill: #4d7aa8; stroke: none; text-anchor: middle; }
.viz-tabs { height: 36px; display: flex; padding-left: 13px; }
.viz-tab { width: 40px; height: 36px; display: flex; justify-content: center; padding-top: 7px; }
.viz-tab.on { border-bottom: 4px solid #f2c811; border-radius: 0 0 2px 2px; }
.tab-ic { width: 20px; height: 20px; fill: none; stroke: #252423; stroke-width: 1; }
.tab-ic .dash { stroke-dasharray: 1.500 1; }
.viz-lbl { padding-left: 13px; height: 16px; line-height: 16px; margin-top: 6px; }
.well { margin-left: 5px; width: 170px; background: #fff; border: 1px dashed #c8c6c4; display: flex; align-items: center; color: #323130; white-space: nowrap; }
.w-values { height: 28px; margin-top: 5px; padding-left: 10px; }
.viz-h { margin: 14px 0 0 15px; height: 22px; line-height: 22px; font-size: 15px; font-weight: 600; color: #484644; }
.viz-sub { padding-left: 10px; height: 16px; line-height: 16px; margin-top: 13px; }
.sub2 { margin-top: 20px; }
.toggle-row { display: flex; align-items: center; margin-top: 12px; height: 16px; padding-left: 18px; gap: 2px; }
.toggle-txt { width: 17px; color: #605e5c; }
.sw { position: relative; width: 28px; height: 2px; background: #605e5c; margin-left: 2px; }
.sw::after { content: ""; position: absolute; top: -5px; width: 12px; height: 12px; border-radius: 50%; }
.sw.off::after { left: 0; background: #f3f2f1; border: 2px solid #605e5c; }
.sw.on::after { right: 0; background: #605e5c; }
.w-drill { height: 25px; margin-top: 14px; padding-left: 8px; }

.fields { width: 174px; flex: none; background: #f3f2f1; overflow: hidden; }
.fd-search { margin-left: 5px; width: 190px; height: 26px; background: #fff; border: 1px solid #605e5c; border-radius: 2px; display: flex; align-items: center; gap: 5px; padding-left: 8px; font-size: 12.500px; color: #605e5c; }
.fd-rule { height: 1px; background: #e1dfdd; margin-top: 7px; }
.fd-row { display: flex; align-items: center; height: 16px; margin-top: 13px; padding-left: 10px; color: #484644; }
.fd-chev { width: 7px; height: 12px; fill: none; stroke: #8a8886; stroke-width: 1; }
.fd-tbl { width: 14px; height: 12px; margin-left: 5px; margin-right: 6px; fill: none; stroke: #3b3a39; stroke-width: 1; }

.status { height: 23px; line-height: 24px; padding-left: 5px; color: #605e5c; font-size: 11.500px; border-top: 1px solid #e1dfdd; background: #f3f2f1; }
.under { height: 3px; background: #f5e9dc; border-top: 1px solid #a8a6a4; }

/* dialog */
.dialog { position: absolute; left: 131px; top: 133px; width: 944px; height: 531px; background: #fff; display: flex; flex-direction: column; box-shadow: 0 0 22px rgba(20, 10, 60, .45); color: #1a1a1a; font-size: 11.3px; }
.dl-title { height: 35px; display: flex; align-items: center; padding: 0 0 3px 9px; gap: 6px; flex: none; }
.dl-logo { width: 14px; height: 16px; }
.dl-x { width: 11px; height: 11px; margin-left: auto; margin-right: 10px; margin-top: -3px; fill: none; stroke: #111; stroke-width: 1; }
.dl-addr { height: 30px; display: flex; flex: none; margin-bottom: 7px; }
.dl-navs { width: 106px; display: flex; align-items: center; flex: none; }
.nv { display: flex; justify-content: center; stroke: #6b6b6b; fill: none; stroke-width: 1.500; }
.nv.dim { stroke: #bdbdbd; }
.nv svg { width: 13px; height: 12px; }
.nv3 svg { width: 8px; height: 5px; }
.nv1 { width: 38px; } .nv2 { width: 22px; } .nv3 { width: 24px; } .nv4 { width: 18px; }
.dl-crumbs { width: 579px; border: 1px solid #d9d9d9; display: flex; align-items: center; padding: 0 0 1px 4px; white-space: nowrap; flex: none; }
.crumb-folder { width: 13px; height: 16px; fill: #fde28d; stroke: #e6c56b; margin-right: 6px; }
.crumb-more { width: 14px; color: #777; margin-right: 2px; text-align: center; }
.crumb-sep { width: 5px; height: 8px; margin: 0 9px; fill: none; stroke: #777; stroke-width: 1.300; }
.crumb-down { width: 9px; height: 5px; margin-left: auto; margin-right: 11px; fill: none; stroke: #666; stroke-width: 1.400; }
.dl-refresh { width: 33px; border: 1px solid #d9d9d9; border-left: 0; display: flex; align-items: center; justify-content: center; flex: none; }
.dl-refresh svg { width: 11px; height: 12px; fill: none; stroke: #6b6b6b; stroke-width: 1.300; }
.dl-refresh .rf-t { fill: #6b6b6b; stroke: none; }
.dl-search { width: 202px; margin-left: 12px; border: 1px solid #d9d9d9; display: flex; align-items: center; padding: 0 0 1px 14px; gap: 13px; color: #666; white-space: nowrap; flex: none; }
.dl-srch { width: 13px; height: 13px; fill: none; stroke: #888; }
.dl-tools { height: 31px; background: #f5f6f7; border-bottom: 1px solid #e5e5e5; display: flex; align-items: center; flex: none; color: #1f3a5a; position: relative; padding-bottom: 2px; }
.tool-org { margin-left: 19px; display: flex; align-items: center; gap: 6px; width: 90px; }
.caret { width: 0; height: 0; border: 4px solid transparent; border-top-color: #1f3a5a; border-bottom-width: 0; border-left-width: 4px; display: inline-block; }
.tool-new { width: 711px; }
.tool-view { width: 16px; height: 12px; fill: none; stroke: #9a9a9a; }
.vw-d { stroke: #a88; }
.caret-view { margin-left: 9px; }
.tool-pane { width: 16px; height: 12px; margin-left: 24px; fill: none; stroke: #8a8a8a; }
.pn-b { fill: #4c9be0; stroke: none; }
.tool-help { width: 16px; height: 16px; border-radius: 50%; margin-left: 20px; background: #0a5fb4; color: #fff; font-weight: 700; font-size: 12px; line-height: 16px; text-align: center; }
.dl-body { height: 352px; display: flex; flex: none; }
.dl-nav { width: 140px; height: 352px; overflow: hidden; flex: none; white-space: nowrap; }
.nrow { height: 24px; display: flex; align-items: center; gap: 4px; }
.nrow span { padding-bottom: 2px; }
.in2 { padding-left: 33px; }
.in1 { padding-left: 24px; }
.gap { margin-top: 8px; }
.nrow.sel { background: #d9d9d9; }
.nic { width: 16px; height: 16px; }
.fo { fill: #fde28d; stroke: #d9bb5e; }
.ck { fill: none; stroke: #3aa02f; stroke-width: 1.800; }
.od { fill: #1976d2; }
.pc { fill: #6cc1f0; stroke: #666; }
.pcs { fill: none; stroke: #888; }
.cb1 { fill: #9fe4f0; } .cb2 { fill: #5cc9e0; } .cb3 { fill: #1a9cc0; }
.dsk { fill: #2a83c9; stroke: #1d5f94; }
.dsk-c { fill: none; stroke: #2a83c9; stroke-width: 1.500; }
.doc { fill: #fff; stroke: #8a9bb0; }
.doc-l { stroke: #3d8fd0; fill: none; }
.dl { fill: #2f8fe0; }
.pct { fill: #fff; stroke: #888; }
.pct-b { fill: #9cc9ec; }
.vd { fill: #444; }
.vd-1 { fill: #c47d3a; } .vd-2 { fill: #4a7fc0; }
.win { fill: #1aa5e8; }
.drv { fill: #d8d8d8; }
.drv-l { stroke: #444; stroke-width: 2; }
.net { fill: #7ab6e0; }
.net-b { fill: #4a93d2; }
.dl-scroll { width: 15px; margin-right: 3px; background: #f0f0f0; display: flex; flex-direction: column; align-items: center; flex: none; }
.sb-arrow { width: 8px; height: 5px; margin: 7px 0; fill: none; stroke: #505050; stroke-width: 1.500; }
.sb-track { flex: 1; width: 100%; padding-top: 112px; }
.sb-thumb { width: 100%; height: 195px; background: #cdcdcd; }
.dl-list { flex: 1; border-left: 1px solid #f0f0f0; padding-left: 15px; }
.lh { height: 25px; display: flex; color: #4c607a; position: relative; }
.lh > span { display: flex; align-items: center; padding-left: 7px; border-right: 1px solid #e5e5e5; }
.c-name { width: 257px; padding-left: 3px !important; position: relative; }
.sort { position: absolute; left: 124px; top: 2px; width: 8px; height: 4px; fill: none; stroke: #888; }
.c-date { width: 144px; }
.c-type { width: 120px; }
.c-size { width: 80px; }
.lrow { height: 22px; width: 598px; display: flex; align-items: center; border: 1px solid transparent; color: #6d6d6d; padding-bottom: 2px; }
.lh + .lrow { margin-top: 5px; }
.lrow.sel { background: #cce8ff; border-color: #99d1ff; }
.f-name { width: 263px; display: flex; align-items: center; gap: 4px; padding-left: 3px; color: #1a1a1a; }
.f-date { width: 144px; }
.f-type { width: 125px; }
.f-size { width: 60px; text-align: right; }
.xl { width: 16px; height: 16px; }
.xl-p { fill: #fff; stroke: #777; }
.xl-c { fill: none; stroke: #107c41; stroke-width: 2.600; }
.xl-l { stroke: #107c41; fill: none; }
.dl-foot { flex: 1; background: #f0f0f0; padding-top: 9px; position: relative; }
.foot-r1 { display: flex; height: 24px; align-items: stretch; }
.foot-lbl { width: 185px; text-align: right; line-height: 22px; }
.foot-in { width: 538px; margin-left: 4px; background: #fff; border: 1px solid #7a7a7a; display: flex; align-items: center; justify-content: space-between; padding: 0 5px 0 3px; }
.foot-in svg, .foot-sel svg { width: 9px; height: 5px; fill: none; stroke: #666; stroke-width: 1.200; }
.foot-sel { width: 188px; margin-left: 12px; background: #e1e1e1; border: 1px solid #adadad; display: flex; align-items: center; justify-content: space-between; padding: 0 4px 0 3px; white-space: nowrap; overflow: hidden; }
.foot-r2 { display: flex; margin-top: 6px; padding-left: 741px; gap: 15px; }
.btn { height: 23px; background: #e1e1e1; border: 1px solid #adadad; display: flex; align-items: center; justify-content: center; }
.btn-open { width: 85px; border: 2px solid #0078d7; justify-content: flex-start; }
.btn-lab { width: 66px; text-align: center; }
.btn-split { flex: 1; height: 100%; border-left: 1px solid #444; display: flex; align-items: center; justify-content: center; }
.btn-split i { width: 0; height: 0; border: 4px solid transparent; border-top: 4px solid #000; border-bottom: 0; }
.btn-cancel { width: 86px; }
.grip { position: absolute; right: 2px; bottom: 2px; width: 8px; height: 8px; fill: #b8b8b8; }

.ring { position: absolute; fill: none; stroke: #e8112d; }
.ring-excel { left: 195px; top: 20px; width: 72px; height: 90px; stroke-width: 5; }
.ring-open { left: 851px; top: 615px; width: 124px; height: 46px; stroke-width: 4; }
.tooltip { position: absolute; left: 1091px; top: 985px; width: 219px; height: 20px; line-height: 18px; padding-left: 5px; background: #fff; border: 1px solid #767676; box-shadow: 2px 2px 3px rgba(0, 0, 0, .5); color: #575757; white-space: nowrap; font-size: 11.7px; }
```
